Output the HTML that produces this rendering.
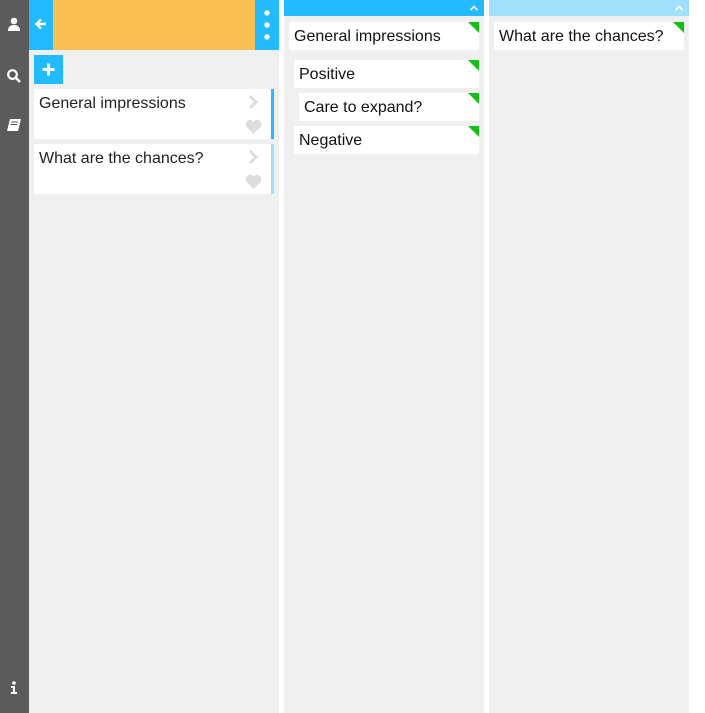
<!DOCTYPE html>
<html><head><style>
body{margin:0;width:705px;height:713px;background:#fff;position:relative;overflow:hidden;font-family:"Liberation Sans",sans-serif;}
div{position:absolute;box-sizing:border-box;}
.sb{left:0;top:0;width:29px;height:713px;background:#5b5b5b;}
.card{background:#fff;font-size:16px;color:#222;padding:6px 5px 0;}
.tri{width:0;height:0;border-top:11px solid #11c011;border-left:11px solid transparent;right:0;top:0;}
.c2{font-size:16px;color:#111;}
</style></head><body>
<div class="sb">
 <svg style="position:absolute;left:7px;top:17px" width="14" height="14" viewBox="0 0 14 14"><circle cx="7" cy="4" r="3.3" fill="#fff"/><path d="M1 14 Q1 8 7 8 Q13 8 13 14Z" fill="#fff"/></svg>
 <svg style="position:absolute;left:6px;top:68px" width="16" height="16" viewBox="0 0 16 16"><circle cx="6.5" cy="6.5" r="4.3" stroke="#fff" stroke-width="2.2" fill="none"/><path d="M9.5 9.5 L14 14" stroke="#fff" stroke-width="2.6"/></svg>
 <svg style="position:absolute;left:6px;top:118px" width="16" height="14" viewBox="0 0 16 14"><path d="M4 1 H15 L12 13 H1 Z" fill="#fff"/><path d="M5 4 H12 M4.5 6.5 H11" stroke="#5b5b5b" stroke-width="1"/></svg>
 <svg style="position:absolute;left:10px;top:681px" width="8" height="14" viewBox="0 0 8 14"><circle cx="4" cy="2" r="1.8" fill="#fff"/><path d="M1 5 H5 V11 H7 V13 H1 V11 H3 V7 H1Z" fill="#fff"/></svg>
</div>
<div style="left:29px;top:0;width:250px;height:713px;background:#efefef;"></div>
<div style="left:29px;top:0;width:24px;height:50px;background:#22bbff;"></div>
<svg style="position:absolute;left:34px;top:17px" width="14" height="14" viewBox="0 0 14 14"><path d="M12 7 H3 M7 2.5 L2.5 7 L7 11.5" stroke="#fff" stroke-width="2.4" fill="none"/></svg>
<div style="left:53px;top:0;width:202px;height:50px;background:#f8bf55;"></div>
<div style="left:255px;top:0;width:24px;height:50px;background:#22bbff;"></div>
<svg style="position:absolute;left:262px;top:8px" width="10" height="34" viewBox="0 0 10 34"><circle cx="5" cy="5" r="2.7" fill="#fff"/><circle cx="5" cy="17" r="2.7" fill="#fff"/><circle cx="5" cy="29" r="2.7" fill="#fff"/></svg>
<div style="left:34px;top:55px;width:29px;height:29px;background:#22bbff;"></div>
<svg style="position:absolute;left:41px;top:62px" width="15" height="15" viewBox="0 0 15 15"><path d="M7.5 1.5 V13.5 M1.5 7.5 H13.5" stroke="#fff" stroke-width="3"/></svg>

<div class="card" style="left:34px;top:89px;width:237px;height:50px;">General impressions</div>
<div style="left:271px;top:89px;width:3px;height:50px;background:#22bbff;"></div>
<div class="card" style="left:34px;top:144px;width:237px;height:50px;">What are the chances?</div>
<div style="left:271px;top:144px;width:3px;height:50px;background:#a0e0fc;"></div>
<svg style="position:absolute;left:247px;top:94px" width="12" height="16" viewBox="0 0 12 16"><path d="M3 2 L9 8 L3 14" stroke="#ddd" stroke-width="3" fill="none"/></svg>
<svg style="position:absolute;left:247px;top:149px" width="12" height="16" viewBox="0 0 12 16"><path d="M3 2 L9 8 L3 14" stroke="#ddd" stroke-width="3" fill="none"/></svg>
<svg style="position:absolute;left:245px;top:119px" width="17" height="15" viewBox="0 0 17 15"><path d="M8.5 15 L1.5 8 A4 4 0 0 1 8.5 2.5 A4 4 0 0 1 15.5 8 Z" fill="#ddd"/></svg>
<svg style="position:absolute;left:245px;top:174px" width="17" height="15" viewBox="0 0 17 15"><path d="M8.5 15 L1.5 8 A4 4 0 0 1 8.5 2.5 A4 4 0 0 1 15.5 8 Z" fill="#ddd"/></svg>

<div style="left:284px;top:0;width:200px;height:713px;background:#efefef;"></div>
<div style="left:284px;top:0;width:200px;height:16px;background:#22bbff;"></div>
<svg style="position:absolute;left:469px;top:4px" width="10" height="8" viewBox="0 0 10 8"><path d="M1.5 6 L5 2.5 L8.5 6" stroke="#fff" stroke-width="1.6" fill="none"/></svg>
<div class="card c2" style="left:289px;top:22px;width:190px;height:28px;">General impressions<div class="tri"></div></div>
<div class="card c2" style="left:294px;top:60px;width:185px;height:28px;">Positive<div class="tri"></div></div>
<div class="card c2" style="left:299px;top:93px;width:180px;height:28px;">Care to expand?<div class="tri"></div></div>
<div class="card c2" style="left:294px;top:126px;width:185px;height:28px;">Negative<div class="tri"></div></div>

<div style="left:489px;top:0;width:200px;height:713px;background:#efefef;"></div>
<div style="left:489px;top:0;width:200px;height:16px;background:#a0e0fc;"></div>
<svg style="position:absolute;left:674px;top:4px" width="10" height="8" viewBox="0 0 10 8"><path d="M1.5 6 L5 2.5 L8.5 6" stroke="#fff" stroke-width="1.6" fill="none"/></svg>
<div class="card c2" style="left:494px;top:22px;width:190px;height:28px;">What are the chances?<div class="tri"></div></div>
</body></html>
